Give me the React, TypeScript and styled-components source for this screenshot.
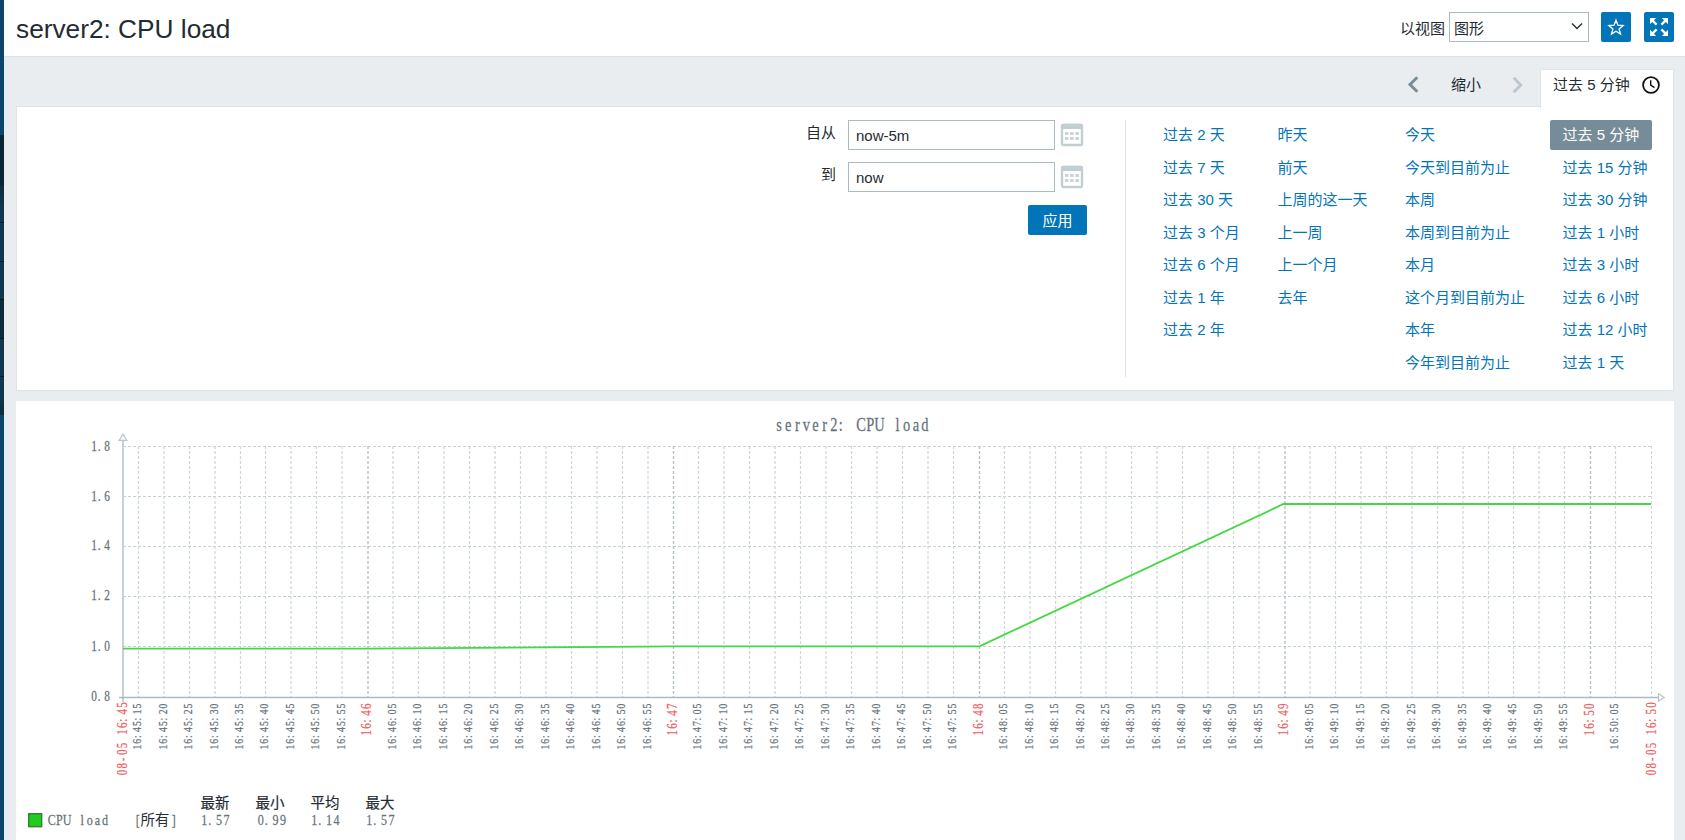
import React from "react";
import styled, { createGlobalStyle } from "styled-components";

const GlobalStyle = createGlobalStyle`
  *, *::before, *::after { box-sizing: border-box; }
  body {
    margin: 0;
    background: #e9edf0;
    color: #1f2c33;
    font: 15px/18px "Liberation Sans", "Noto Sans CJK SC", sans-serif;
    overflow: hidden;
  }
`;

const Page = styled.div`
  display: flex;
  height: 840px;
  overflow: hidden;
`;

const Sidebar = styled.nav`
  width: 4px;
  flex: none;
  background: #0c466b;
  padding-top: 135px;
`;

const ActiveMenu = styled.div`
  height: 50px;
  background: #0a2533;
`;

const SubMenu = styled.div`
  display: flex;
  flex-direction: column;
  height: 230px;
  background: linear-gradient(#0e2c3d, #12364d 10%, #12364d 92%, #0e2c3d);
`;

const SubItem = styled.div<{ $height: number; $dark?: boolean }>`
  height: ${(p) => p.$height}px;
  border-bottom: 1px solid #07151d;
  background: ${(p) => (p.$dark ? "#0c2a3a" : "transparent")};
`;

const Main = styled.main`
  flex: 1;
  min-width: 0;
  display: flex;
  flex-direction: column;
`;

const Header = styled.header`
  flex: none;
  height: 57px;
  padding: 0 11px 0 12px;
  display: flex;
  justify-content: space-between;
  background: #fff;
  border-bottom: 1px solid #dfe4e7;
`;

const Title = styled.h1`
  margin: 0;
  padding-top: 14px;
  font-size: 26.25px;
  line-height: 30px;
  font-weight: 400;
`;

const HeaderControls = styled.div`
  display: flex;
  padding-top: 12px;
`;

const ViewLabel = styled.label`
  padding: 8px 4px 0 0;
`;

const SelectBox = styled.div`
  width: 140px;
  height: 30px;
  padding: 7px 5px 0 4px;
  display: flex;
  justify-content: space-between;
  border: 1px solid #acbbc2;
  background: #fff;
`;

const SelectArrow = styled.svg`
  margin-top: -1px;
`;

const IconButton = styled.button<{ $gap: number }>`
  width: 30px;
  height: 30px;
  margin: 0 0 0 ${(p) => p.$gap}px;
  padding: 0;
  display: flex;
  align-items: center;
  justify-content: center;
  border: 0;
  border-radius: 2px;
  background: #0275b8;
`;

const TabBar = styled.div`
  flex: none;
  height: 50px;
  margin: 0 11px 0 12px;
  display: flex;
  justify-content: flex-end;
  align-items: flex-end;
`;

const NavArrow = styled.div`
  width: 12px;
  height: 37px;
  padding-top: 6px;
`;

const ZoomOut = styled.div`
  height: 37px;
  padding: 6px 31px 0 32px;
`;

const TimeTab = styled.div`
  width: 134px;
  height: 39px;
  margin: 0 0 -1px 16px;
  padding: 6px 13px 0 12px;
  display: flex;
  justify-content: space-between;
  align-items: flex-start;
  background: #fff;
  border: 1px solid #dfe4e7;
  border-bottom: 0;
  border-radius: 2px 2px 0 0;
  z-index: 1;
`;

const FilterPanel = styled.section`
  flex: none;
  height: 285px;
  margin: -1px 11px 10px 12px;
  padding: 13px 21px 13px 0;
  display: flex;
  justify-content: flex-end;
  background: #fff;
  border: 1px solid #dfe4e7;
`;

const RangeForm = styled.form`
  width: 291px;
  margin-right: 38px;
`;

const Field = styled.div`
  display: flex;
  height: 30px;
  margin-bottom: 12px;
`;

const FieldLabel = styled.label`
  width: 40px;
  padding: 4px 0 0;
  margin-right: 12px;
  text-align: right;
`;

const TextInput = styled.input`
  width: 207px;
  height: 30px;
  margin: 0 5px 0 0;
  padding: 0 7px;
  border: 1px solid #acbbc2;
  color: #1f2c33;
  font: inherit;
  outline: none;
`;

const FormActions = styled.div`
  display: flex;
  justify-content: flex-end;
  padding-top: 1px;
`;

const ApplyButton = styled.button`
  width: 59px;
  height: 30px;
  padding: 1px 0 0;
  border: 0;
  border-radius: 2px;
  background: #0275b8;
  color: #fff;
  font: inherit;
`;

const QuickRanges = styled.div`
  display: grid;
  grid-template-columns: 114.5px 127.5px 145px 102px;
  padding-left: 37px;
  border-left: 1px solid #dfe4e7;
`;

const RangeColumn = styled.div`
  display: flex;
  flex-direction: column;
  align-items: flex-start;
`;

const RangeLink = styled.a<{ $selected?: boolean; $inset?: boolean }>`
  height: ${(p) => (p.$selected ? 30 : 32.5)}px;
  margin-bottom: ${(p) => (p.$selected ? 2.5 : 0)}px;
  padding: 6px ${(p) => (p.$inset ? 12.5 : 0)}px 0;
  border-radius: 2px;
  white-space: nowrap;
  color: ${(p) => (p.$selected ? "#fff" : "#0275b8")};
  background: ${(p) => (p.$selected ? "#768d99" : "transparent")};
`;

const GraphPanel = styled.section`
  flex: 1;
  margin: 0 11px 0 12px;
  background: #fff;
  overflow: hidden;
`;

const GraphSvg = styled.svg`
  display: block;
  font-family: "Liberation Serif", "Noto Sans CJK SC", serif;
`;

const rangeColumns: string[][] = [
  ["过去 2 天", "过去 7 天", "过去 30 天", "过去 3 个月", "过去 6 个月", "过去 1 年", "过去 2 年"],
  ["昨天", "前天", "上周的这一天", "上一周", "上一个月", "去年"],
  ["今天", "今天到目前为止", "本周", "本周到目前为止", "本月", "这个月到目前为止", "本年", "今年到目前为止"],
  ["过去 5 分钟", "过去 15 分钟", "过去 30 分钟", "过去 1 小时", "过去 3 小时", "过去 6 小时", "过去 12 小时", "过去 1 天"],
];

const CalendarIcon = () => (
  <svg width="24" height="30" viewBox="0 0 24 30">
    <rect x="2" y="5" width="20" height="20" rx="1.5" fill="#fff" stroke="#c3ced3" strokeWidth="2.4" />
    <path d="M1 5.7q0-2 2-2h18q2 0 2 2V9H1z" fill="#c3ced3" />
    <g fill="#c9d2d7">
      {[5, 10.2, 15.4].map((x) => (
        <React.Fragment key={x}>
          <rect x={x} y="12" width="3.4" height="3" />
          <rect x={x} y="17" width="3.4" height="3" />
        </React.Fragment>
      ))}
    </g>
  </svg>
);

/* Fixed-pitch narrow serif text: every glyph is centred in its own cell. */
const SQUEEZE = 0.78;
interface CellTextProps {
  x: number;
  y: number;
  pitch: number;
  size: number;
  fill: string;
  rotate?: boolean;
  children: string;
}
const CellText = ({ x, y, pitch, size, fill, rotate, children }: CellTextProps) => {
  const xs = children
    .split("")
    .map((c, i) => {
      const shift = c === "." || c === ":" ? 0.26 : 0.5;
      return (((i + shift) * pitch) / SQUEEZE).toFixed(2);
    })
    .join(" ");
  return (
    <text
      transform={`translate(${x} ${y})${rotate ? " rotate(-90)" : ""} scale(${SQUEEZE} 1)`}
      x={xs}
      y={0}
      fontSize={size}
      fill={fill}
      stroke={fill}
      strokeWidth={0.25}
      textAnchor="middle"
      xmlSpace="preserve"
    >
      {children}
    </text>
  );
};

const minorTicks = Array.from({ length: 59 }, (_, i) => {
  const seconds = 15 + i * 5;
  const second = seconds % 60;
  return {
    x: Math.round((368 + (i - 9) * 25.47 - (second === 0 ? 0 : 0.4)) * 2) / 2,
    minute: 45 + Math.floor(seconds / 60),
    second,
  };
}).filter((t) => t.x < 1630);

const TEXT = "#66727a";
const RED = "#ee5f5f";

const Graph = () => (
  <GraphSvg width="1658" height="439" viewBox="16 401 1658 439">
    <CellText x={774.5} y={430.5} pitch={9.12} size={18.5} fill={TEXT}>
      server2: CPU load
    </CellText>

    <g fill="none" strokeWidth="1" strokeDasharray="3 2">
      {[446.5, 496.5, 546.5, 596.5, 646.5].map((y) => (
        <path key={y} d={`M123 ${y}H1652`} stroke="#c5d1d7" />
      ))}
      {minorTicks.map((t) => (
        <path
          key={t.x}
          d={`M${t.x} 446V697`}
          stroke={t.second === 0 ? "#b6c3c9" : "#ccd6db"}
          strokeWidth={t.second === 0 ? 1.4 : 1.2}
        />
      ))}
      <path d="M1651.5 446V697" stroke="#ccd6db" />
    </g>

    <path d="M123 440V702" stroke="#c6d1d7" strokeWidth="2" />
    <path d="M119 697.5H1658" stroke="#acbbc2" strokeWidth="1.3" />
    <path d="M119.2 440.3L123 434.2L126.8 440.3Z" fill="#fff" stroke="#b6c4ca" strokeWidth="1.2" />
    <path d="M1658.5 693.8L1664.3 697.5L1658.5 701.2Z" fill="#fff" stroke="#b6c4ca" strokeWidth="1.2" />

    <path
      d="M123 648.6H368L673.5 646.4H979.5L1283.5 504H1651"
      fill="none"
      stroke="#42d942"
      strokeWidth="1.8"
    />

    {["1.8", "1.6", "1.4", "1.2", "1.0", "0.8"].map((label, i) => (
      <CellText key={label} x={91} y={[451, 501, 550, 600, 650.5, 700.5][i]} pitch={6.4} size={14.5} fill={TEXT}>
        {label}
      </CellText>
    ))}

    {minorTicks.map((t) =>
      t.second === 0 ? (
        <CellText key={t.x} x={t.x + 3} y={736} pitch={6.6} size={14} fill={RED} rotate>
          {`16:${t.minute}`}
        </CellText>
      ) : (
        <CellText key={t.x} x={t.x + 2.8} y={750} pitch={5.87} size={12.5} fill={TEXT} rotate>
          {`16:${t.minute}:${String(t.second).padStart(2, "0")}`}
        </CellText>
      ),
    )}
    <CellText x={127} y={776} pitch={6.75} size={14} fill={RED} rotate>
      08-05 16:45
    </CellText>
    <CellText x={1656} y={776} pitch={6.75} size={14} fill={RED} rotate>
      08-05 16:50
    </CellText>

    <rect x="28.7" y="813.7" width="13" height="13" fill="#1fcc1f" stroke="#2f7a35" strokeWidth="1.3" />
    <CellText x={48} y={825} pitch={7.6} size={15.5} fill={TEXT}>
      CPU load
    </CellText>
    <CellText x={134} y={825} pitch={7.5} size={15.5} fill={TEXT}>
      [
    </CellText>
    <text x="140.5" y="825" fontSize="14.4" fill="#1f2c33">
      所有
    </text>
    <CellText x={170} y={825} pitch={7.5} size={15.5} fill={TEXT}>
      ]
    </CellText>
    {[
      { name: "最新", x: 200.5, value: "1.57" },
      { name: "最小", x: 255.5, value: "0.99" },
      { name: "平均", x: 310.5, value: "1.14" },
      { name: "最大", x: 365.5, value: "1.57" },
    ].map((s) => (
      <React.Fragment key={s.name}>
        <text x={s.x} y="807.5" fontSize="14.5" fill="#1f2c33" stroke="#1f2c33" strokeWidth={0.2}>
          {s.name}
        </text>
        <CellText x={s.x + (s.value === "0.99" ? 1.5 : 0)} y={825} pitch={7.45} size={15.5} fill={TEXT}>
          {s.value}
        </CellText>
      </React.Fragment>
    ))}
  </GraphSvg>
);

export default function App() {
  return (
    <Page>
      <GlobalStyle />
      <Sidebar>
        <ActiveMenu />
        <SubMenu>
          <SubItem $height={38} />
          <SubItem $height={39} />
          <SubItem $height={38} />
          <SubItem $height={39} $dark />
          <SubItem $height={38} />
        </SubMenu>
      </Sidebar>
      <Main>
        <Header>
          <Title>server2: CPU load</Title>
          <HeaderControls>
            <ViewLabel>以视图</ViewLabel>
            <SelectBox>
              图形
              <SelectArrow width="12" height="16" viewBox="0 0 12 16">
                <path d="M1 4.5l5 5 5-5" fill="none" stroke="#1f2c33" strokeWidth="1.3" />
              </SelectArrow>
            </SelectBox>
            <IconButton $gap={12}>
              <svg width="18" height="18" viewBox="0 0 18 18">
                <path
                  d="M9 2.2l1.9 5 5.3.3-4.1 3.4 1.4 5.2L9 13.2l-4.5 2.9 1.4-5.2L1.8 7.5l5.3-.3z"
                  fill="none"
                  stroke="#fff"
                  strokeWidth="1.3"
                />
              </svg>
            </IconButton>
            <IconButton $gap={13}>
              <svg width="20" height="20" viewBox="0 0 20 20">
                <g fill="#fff" stroke="#fff">
                  {[0, 90, 180, 270].map((a) => (
                    <g key={a} transform={`rotate(${a} 10 10)`}>
                      <path d="M1 1h6.2L1 7.2z" stroke="none" />
                      <path d="M3 3l4.6 4.6" strokeWidth="2.4" />
                    </g>
                  ))}
                </g>
              </svg>
            </IconButton>
          </HeaderControls>
        </Header>

        <TabBar>
          <NavArrow>
            <svg width="12" height="18" viewBox="0 0 12 18">
              <path d="M10.3 1.2L3 8.5l7.3 7.3" fill="none" stroke="#768d99" strokeWidth="3" />
            </svg>
          </NavArrow>
          <ZoomOut>缩小</ZoomOut>
          <NavArrow>
            <svg width="12" height="18" viewBox="0 0 12 18">
              <path d="M1.7 1.7L8.8 9l-7.1 7.3" fill="none" stroke="#bcc8ce" strokeWidth="3" />
            </svg>
          </NavArrow>
          <TimeTab>
            <span>过去 5 分钟</span>
            <svg width="18" height="18" viewBox="0 0 18 18">
              <circle cx="9" cy="9" r="7.9" fill="none" stroke="#111" strokeWidth="1.8" />
              <path d="M8.7 4.2v5l3.8 2.4" fill="none" stroke="#111" strokeWidth="1.4" />
            </svg>
          </TimeTab>
        </TabBar>

        <FilterPanel>
          <RangeForm>
            <Field>
              <FieldLabel>自从</FieldLabel>
              <TextInput defaultValue="now-5m" />
              <CalendarIcon />
            </Field>
            <Field>
              <FieldLabel>到</FieldLabel>
              <TextInput defaultValue="now" />
              <CalendarIcon />
            </Field>
            <FormActions>
              <ApplyButton type="button">应用</ApplyButton>
            </FormActions>
          </RangeForm>
          <QuickRanges>
            {rangeColumns.map((column, c) => (
              <RangeColumn key={c}>
                {column.map((label, r) => (
                  <RangeLink key={label} $inset={c === 3} $selected={c === 3 && r === 0}>
                    {label}
                  </RangeLink>
                ))}
              </RangeColumn>
            ))}
          </QuickRanges>
        </FilterPanel>

        <GraphPanel>
          <Graph />
        </GraphPanel>
      </Main>
    </Page>
  );
}
